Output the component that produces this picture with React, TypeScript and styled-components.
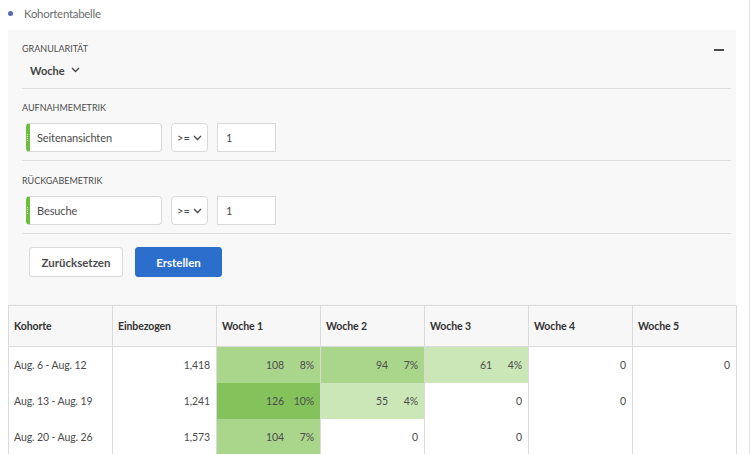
import React from "react";
import styled, { createGlobalStyle } from "styled-components";

const Global = createGlobalStyle`
  html, body { margin: 0; padding: 0; background: #fff; }
  body { font-family: Lato, "Open Sans", sans-serif; color: #4b4b4b; }
  * { box-sizing: border-box; }
`;

const Page = styled.div`
  width: 750px;
  height: 454px;
  overflow: hidden;
  border-right: 1px solid #e3e3e3;
`;

const TitleRow = styled.div`
  height: 30px;
  display: flex;
  align-items: center;
  padding-left: 8px;
  gap: 11px;
  padding-bottom: 3px;
`;

const Dot = styled.span`
  width: 5px;
  height: 5px;
  border-radius: 50%;
  background: #5a66b4;
`;

const Title = styled.span`
  font-size: 11.5px;
  letter-spacing: -0.3px;
  color: #6e6e6e;
`;

const Panel = styled.div`
  margin: 0 13px 0 8px;
  background: #f8f8f8;
  padding: 0 5px 28px 14px;
`;

const Section = styled.div<{ $top: number; $bottom: number; $gap: number }>`
  display: flex;
  flex-direction: column;
  gap: ${(p) => p.$gap}px;
  padding: ${(p) => p.$top}px 0 ${(p) => p.$bottom}px;
  border-bottom: 1px solid #dedede;
`;

const LabelRow = styled.div`
  display: flex;
  justify-content: space-between;
  align-items: center;
`;

const Label = styled.div`
  font-size: 9px;
  line-height: 12px;
  color: #4b4b4b;
  text-transform: uppercase;
`;

const Minus = styled.span`
  width: 10px;
  height: 2px;
  background: #4b4b4b;
  margin-right: 7px;
  margin-top: 2px;
`;

const Picker = styled.div`
  display: flex;
  align-items: center;
  gap: 6px;
  padding-left: 8px;
  height: 16px;
  font-size: 11px;
  font-weight: 700;
  color: #444;
`;

const InputRow = styled.div`
  display: flex;
  gap: 9px;
  padding-left: 4px;
  height: 29px;
`;

const MetricBox = styled.div`
  position: relative;
  width: 136px;
  background: #fff;
  border: 1px solid #d9d9d9;
  border-left: 4px solid #6cbf3c;
  border-radius: 4px;
  display: flex;
  align-items: center;
  padding-left: 7px;
  font-size: 11px;
  letter-spacing: -0.1px;
  color: #4b4b4b;
  &::before {
    content: "";
    position: absolute;
    left: -3px;
    top: 10px;
    width: 1px;
    height: 8px;
    background: repeating-linear-gradient(#fff 0 1px, transparent 1px 2px);
    opacity: 0.8;
  }
`;

const OpBox = styled.div`
  width: 37px;
  background: #fff;
  border: 1px solid #d9d9d9;
  border-radius: 4px;
  display: flex;
  align-items: center;
  justify-content: center;
  gap: 3px;
  font-size: 11px;
  color: #4b4b4b;
`;

const ValueBox = styled.div`
  width: 59px;
  background: #fff;
  border: 1px solid #d9d9d9;
  display: flex;
  align-items: center;
  padding-left: 8px;
  font-size: 11px;
  color: #4b4b4b;
`;

const ButtonRow = styled.div`
  display: flex;
  gap: 12px;
  margin: 13px 0 0 7px;
`;

const Button = styled.button<{ $primary?: boolean }>`
  height: 30px;
  width: ${(p) => (p.$primary ? 87 : 94)}px;
  border-radius: 3px;
  border: 1px solid ${(p) => (p.$primary ? "#2c6ecb" : "#d9d9d9")};
  background: ${(p) => (p.$primary ? "#2c6ecb" : "#fff")};
  color: ${(p) => (p.$primary ? "#fff" : "#4b4b4b")};
  font-family: Lato, sans-serif;
  font-weight: 700;
  font-size: 11.5px;
  padding: 0;
`;

const Table = styled.table`
  margin-left: 8px;
  width: 729px;
  border-collapse: collapse;
  table-layout: fixed;
  border: 1px solid #dadada;
  border-bottom: none;
  font-size: 10.5px;
  letter-spacing: -0.1px;
  color: #4b4b4b;
`;

const Th = styled.th`
  height: 41px;
  background: #f7f7f7;
  border: 1px solid #dadada;
  text-align: left;
  padding: 0 0 0 5px;
  font-weight: 700;
  font-size: 10.5px;
  color: #323232;
`;

const Td = styled.td<{ $bg?: string; $align?: "left" | "right" }>`
  height: 36px;
  padding: 0 6px 0 5px;
  background: ${(p) => p.$bg || "#fff"};
  border-left: 1px solid #dadada;
  border-right: 1px solid #dadada;
  text-align: ${(p) => p.$align || "right"};
  white-space: nowrap;
`;

const Pct = styled.span`
  display: inline-block;
  min-width: 22px;
  margin-left: 8px;
  text-align: right;
`;

const Chevron = () => (
  <svg width="9" height="6" viewBox="0 0 9 6" fill="none">
    <path d="M1 1l3.5 3.5L8 1" stroke="#4b4b4b" strokeWidth="1.4" />
  </svg>
);

const shades: Record<string, string> = {
  a: "#aad68c",
  b: "#84c35c",
  c: "#cbe7b7",
};

type Cell = { v?: string; p?: string; s?: string } | null;

const rows: { name: string; n: string; cells: Cell[] }[] = [
  {
    name: "Aug. 6 - Aug. 12",
    n: "1,418",
    cells: [
      { v: "108", p: "8%", s: "a" },
      { v: "94", p: "7%", s: "a" },
      { v: "61", p: "4%", s: "c" },
      { v: "0" },
      { v: "0" },
    ],
  },
  {
    name: "Aug. 13 - Aug. 19",
    n: "1,241",
    cells: [
      { v: "126", p: "10%", s: "b" },
      { v: "55", p: "4%", s: "c" },
      { v: "0" },
      { v: "0" },
      null,
    ],
  },
  {
    name: "Aug. 20 - Aug. 26",
    n: "1,573",
    cells: [{ v: "104", p: "7%", s: "a" }, { v: "0" }, { v: "0" }, null, null],
  },
];

const headers = ["Kohorte", "Einbezogen", "Woche 1", "Woche 2", "Woche 3", "Woche 4", "Woche 5"];

export default function App() {
  return (
    <Page>
      <Global />
      <TitleRow>
        <Dot />
        <Title>Kohortentabelle</Title>
      </TitleRow>
      <Panel>
        <Section $top={13} $bottom={10} $gap={7}>
          <LabelRow>
            <Label>Granularität</Label>
            <Minus />
          </LabelRow>
          <Picker>
            Woche <Chevron />
          </Picker>
        </Section>
        <Section $top={13} $bottom={8} $gap={9}>
          <Label>Aufnahmemetrik</Label>
          <InputRow>
            <MetricBox>Seitenansichten</MetricBox>
            <OpBox>
              &gt;= <Chevron />
            </OpBox>
            <ValueBox>1</ValueBox>
          </InputRow>
        </Section>
        <Section $top={14} $bottom={8} $gap={9}>
          <Label>Rückgabemetrik</Label>
          <InputRow>
            <MetricBox>Besuche</MetricBox>
            <OpBox>
              &gt;= <Chevron />
            </OpBox>
            <ValueBox>1</ValueBox>
          </InputRow>
        </Section>
        <ButtonRow>
          <Button>Zurücksetzen</Button>
          <Button $primary>Erstellen</Button>
        </ButtonRow>
      </Panel>
      <Table>
        <thead>
          <tr>
            {headers.map((h) => (
              <Th key={h}>{h}</Th>
            ))}
          </tr>
        </thead>
        <tbody>
          {rows.map((r) => (
            <tr key={r.name}>
              <Td $align="left">{r.name}</Td>
              <Td>{r.n}</Td>
              {r.cells.map((c, i) => (
                <Td key={i} $bg={c?.s ? shades[c.s] : undefined}>
                  {c?.v}
                  {c?.p && <Pct>{c.p}</Pct>}
                </Td>
              ))}
            </tr>
          ))}
        </tbody>
      </Table>
    </Page>
  );
}
